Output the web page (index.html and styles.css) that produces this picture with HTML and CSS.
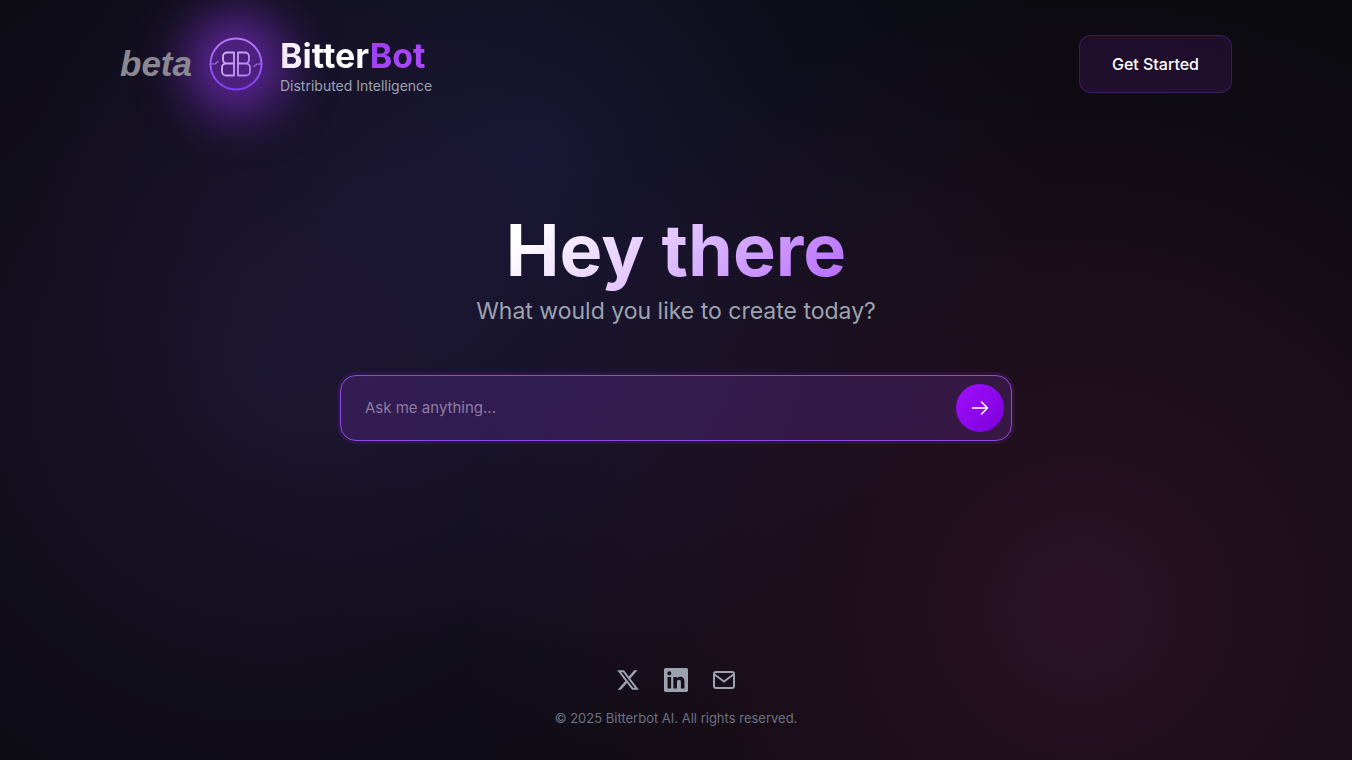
FILE: index.html
```html
<!DOCTYPE html>
<html lang="en">
<head>
    <meta charset="UTF-8">
    <meta name="viewport" content="width=device-width, initial-scale=1.0">
    <title>BitterBot</title>
    <link rel="stylesheet" href="styles.css">
</head>
<body>

    <header class="header">
        <a href="#" class="brand">
            <span class="beta">beta</span>
            <svg class="logo" viewBox="0 0 56 56" fill="none" stroke-linecap="round" stroke-linejoin="round">
                <defs>
                    <linearGradient id="ring" x1="0" y1="0" x2="0" y2="56" gradientUnits="userSpaceOnUse">
                        <stop offset="0" stop-color="#b57af5"/>
                        <stop offset="1" stop-color="#7c3aed"/>
                    </linearGradient>
                    <linearGradient id="letters" x1="10" y1="16" x2="46" y2="42" gradientUnits="userSpaceOnUse">
                        <stop offset="0" stop-color="#d9b8fb"/>
                        <stop offset="0.5" stop-color="#c79bf8"/>
                        <stop offset="1" stop-color="#a56bf0"/>
                    </linearGradient>
                </defs>
                <circle cx="28" cy="28" r="25.5" stroke="url(#ring)" stroke-width="2"/>
                <g stroke="url(#letters)" stroke-width="1.8">
                    <path d="M26 16.5H19a4 4 0 0 0-4 4v3a4 4 0 0 0 4 4H26M18 27.5a4 4 0 0 0-4 4v4a4 4 0 0 0 4 4H26V16.5"/>
                    <path d="M30 16.5h7a4 4 0 0 1 4 4v3a4 4 0 0 1-4 4H30M38 27.5a4 4 0 0 1 4 4v4a4 4 0 0 1-4 4H30V16.5"/>
                </g>
                <g stroke="#a66bea" stroke-width="1.2">
                    <path d="M2.5 28H7l3-2.5"/>
                    <path d="M53.5 28H49l-3 2.5"/>
                </g>
            </svg>
            <span class="brand-text">
                <span class="brand-name"><span class="bitter">Bitter</span><span class="bot">Bot</span></span>
                <span class="tagline">Distributed Intelligence</span>
            </span>
        </a>
        <button type="button" class="get-started">Get Started</button>
    </header>

    <main class="main">
        <h1>Hey there</h1>
        <p class="subtitle">What would you like to create today?</p>
        <form class="ask-form">
            <input type="text" class="ask-input" placeholder="Ask me anything..." aria-label="Ask me anything">
            <button type="submit" class="send" aria-label="Send">
                <svg width="24" height="24" viewBox="0 0 24 24" fill="none" stroke="currentColor" stroke-width="1.6" stroke-linecap="round" stroke-linejoin="round">
                    <path d="M4.5 12h15M13.5 6l6 6-6 6"/>
                </svg>
            </button>
        </form>
    </main>

    <footer class="footer">
        <nav class="social">
            <a href="#" aria-label="X">
                <svg width="24" height="24" viewBox="0 0 24 24" fill="currentColor">
                    <path d="M18.244 2.25h3.308l-7.227 8.26 8.502 11.24H16.17l-5.214-6.817L4.99 21.75H1.68l7.73-8.835L1.254 2.25H8.08l4.713 6.231zm-1.161 17.52h1.833L7.084 4.126H5.117z"/>
                </svg>
            </a>
            <a href="#" aria-label="LinkedIn">
                <svg width="24" height="24" viewBox="0 0 24 24" fill="currentColor">
                    <path d="M20.447 20.452h-3.554v-5.569c0-1.328-.027-3.037-1.852-3.037-1.853 0-2.136 1.445-2.136 2.939v5.667H9.351V9h3.414v1.561h.046c.477-.9 1.637-1.85 3.37-1.85 3.601 0 4.267 2.37 4.267 5.455v6.286zM5.337 7.433a2.062 2.062 0 0 1-2.063-2.065 2.064 2.064 0 1 1 2.063 2.065zm1.782 13.019H3.555V9h3.564v11.452zM22.225 0H1.771C.792 0 0 .774 0 1.729v20.542C0 23.227.792 24 1.771 24h20.451C23.2 24 24 23.227 24 22.271V1.729C24 .774 23.2 0 22.222 0h.003z"/>
                </svg>
            </a>
            <a href="#" aria-label="Email">
                <svg width="24" height="24" viewBox="0 0 24 24" fill="none" stroke="currentColor" stroke-width="2" stroke-linecap="round" stroke-linejoin="round">
                    <rect x="2" y="4" width="20" height="16" rx="2"/>
                    <path d="M2.5 6.5L12 13.5l9.5-7"/>
                </svg>
            </a>
        </nav>
        <p class="copyright">© 2025 Bitterbot AI. All rights reserved.</p>
    </footer>

</body>
</html>
```

FILE: styles.css
```css
* {
    box-sizing: border-box;
    margin: 0;
    padding: 0;
}
body {
    display: flex;
    flex-direction: column;
    min-height: 100vh;
    font-family: Inter, "Liberation Sans", sans-serif;
    color: #fff;
    background:
        radial-gradient(circle at 20% 50%, rgba(120, 70, 200, 0.15), transparent 50%),
        radial-gradient(circle at 80% 80%, rgba(240, 60, 160, 0.14), transparent 50%),
        radial-gradient(circle at 40% 20%, rgba(80, 80, 220, 0.13), transparent 50%),
        #0a0a0f;
}
a {
    color: inherit;
    text-decoration: none;
}
button {
    font-family: inherit;
    cursor: pointer;
}

/* Header */
.header {
    display: flex;
    align-items: center;
    justify-content: space-between;
    padding: 32px 120px;
}
.brand {
    display: flex;
    align-items: center;
    gap: 16px;
}
/* keeps the text above the logo glow */
.beta,
.brand-text {
    position: relative;
    z-index: 1;
}
.beta {
    font-family: "Liberation Sans", sans-serif;
    font-size: 35px;
    line-height: 40px;
    font-weight: 700;
    font-style: italic;
    color: #8b8891;
}
.logo {
    width: 56px;
    height: 56px;
    border-radius: 50%;
    background: rgba(147, 51, 234, 0.46);
    box-shadow: 0 0 50px 22px rgba(147, 51, 234, 0.6);
}
.brand-text {
    display: flex;
    flex-direction: column;
    padding-top: 4px;
}
.brand-name {
    font-size: 34px;
    line-height: 40px;
    font-weight: 700;
}
.bitter {
    background: linear-gradient(90deg, #f3e8ff, #fff 50%);
    background-clip: text;
    -webkit-background-clip: text;
    color: transparent;
}
.bot {
    background: linear-gradient(135deg, #9a3cf0, #b04cff);
    background-clip: text;
    -webkit-background-clip: text;
    color: transparent;
}
.tagline {
    font-size: 14px;
    line-height: 20px;
    color: #9ca3af;
}
.get-started {
    padding: 16px 32px;
    font-size: 16px;
    line-height: 24px;
    font-weight: 500;
    color: #fff;
    background: rgba(88, 28, 135, 0.24);
    border: 1px solid rgba(147, 51, 234, 0.3);
    border-radius: 12px;
}

/* Greeting and prompt */
.main {
    display: flex;
    flex-direction: column;
    align-items: center;
    flex: 1;
    padding: 80px 24px 40px;
}
h1 {
    margin-bottom: 3px;
    font-size: 72px;
    line-height: 84px;
    font-weight: 700;
    background: linear-gradient(135deg, #fff 10%, #e0c0ff 50%, #b566ff 100%);
    background-clip: text;
    -webkit-background-clip: text;
    color: transparent;
}
.subtitle {
    margin-bottom: 48px;
    font-size: 23px;
    line-height: 32px;
    color: #9ca3af;
}
.ask-form {
    display: flex;
    align-items: center;
    width: 100%;
    max-width: 672px;
    padding: 8px 7px 8px 24px;
    background: rgba(135, 60, 210, 0.22);
    border: 1px solid #9448e8;
    border-radius: 16px;
    box-shadow: 0 0 0 3px rgba(147, 51, 234, 0.12);
}
.ask-input {
    flex: 1;
    min-width: 0;
    font-family: inherit;
    font-size: 15px;
    line-height: 24px;
    color: #fff;
    background: none;
    border: none;
    outline: none;
}
.ask-input::placeholder {
    color: #8f7ba3;
    opacity: 1;
}
.send {
    display: flex;
    align-items: center;
    justify-content: center;
    width: 48px;
    height: 48px;
    color: #fff;
    background: linear-gradient(135deg, #a010ff, #7a00d8);
    border: none;
    border-radius: 50%;
}

/* Footer */
.footer {
    display: flex;
    flex-direction: column;
    align-items: center;
    gap: 16px;
    padding: 32px;
}
.social {
    display: flex;
    gap: 24px;
    color: #9ca3af;
}
.social svg {
    display: block;
}
.copyright {
    font-size: 13px;
    line-height: 20px;
    color: #6b7280;
}
```
